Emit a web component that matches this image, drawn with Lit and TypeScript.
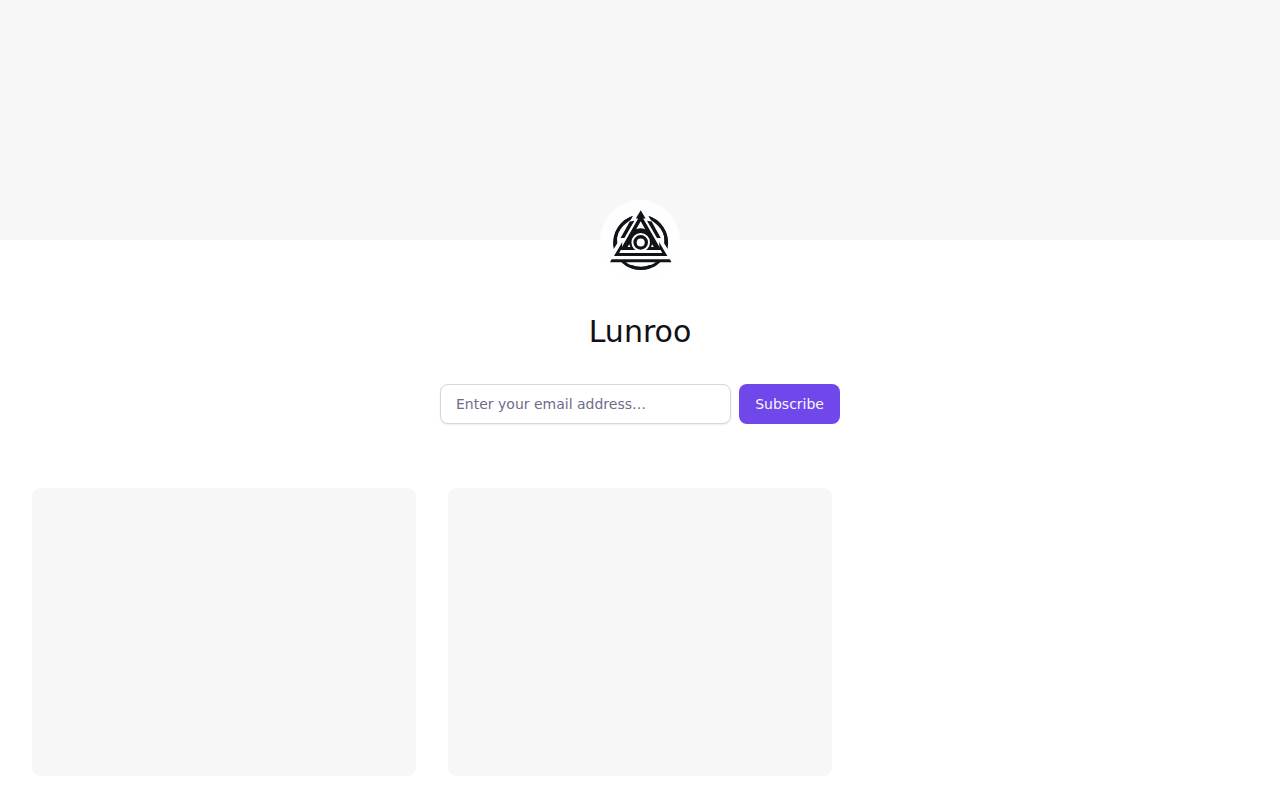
import { LitElement, html, css } from "lit";
import { customElement } from "lit/decorators.js";

@customElement("app-root")
export class AppRoot extends LitElement {
  static styles = css`
    :host { display: block; height: 800px; overflow: hidden; background: #fff; color: #101114; font-family: "DejaVu Sans", sans-serif; }
    * { box-sizing: border-box; }
    .cover { height: 240px; background: #f7f7f7; }
    .profile { display: flex; flex-direction: column; align-items: center; margin-top: -40px; }
    .avatar { width: 80px; height: 80px; border-radius: 50%; background: #fefefe; overflow: hidden; }
    .avatar svg { display: block; }
    h1 { margin: 32px 0 0; font-size: 30px; line-height: 40px; font-weight: 400; }
    form { display: flex; gap: 8px; width: 400px; height: 40px; margin-top: 32px; }
    input, button { font-family: inherit; font-size: 14px; line-height: 20px; border-radius: 8px; margin: 0; }
    input { flex: 1; min-width: 0; padding: 0 15px; border: 1px solid #d5d6d9; background: #fff; color: #101114; box-shadow: 0 1px 2px rgba(0, 0, 0, 0.08); outline: none; }
    input::placeholder { color: #6f6c8b; opacity: 1; }
    button { padding: 0 16px; border: 0; background: #7047eb; color: #f7f7f7; }
    .grid { display: grid; grid-template-columns: repeat(3, 1fr); gap: 32px; padding: 64px 32px 24px; }
    .card { height: 288px; border-radius: 8px; background: #f7f7f7; }
  `;

  render() {
    return html`
      <div class="cover"></div>
      <div class="profile">
        <div class="avatar">
          <svg width="80" height="80" viewBox="0 0 80 80" fill="#101318" aria-hidden="true">
            <circle cx="40.7" cy="42.5" r="25.8" fill="none" stroke="#101318" stroke-width="3.2" />
            <path d="M40.7 3 L78 62 H3.4Z" fill="#fefefe" />
            <path d="M33 15.9 C19.5 19.8 11.6 33 13.7 49 L17.3 43.3 C15.9 31.5 20.8 23.5 30.6 19.9Z" />
            <path d="M48.4 15.9 C61.9 19.8 69.8 33 67.7 49 L64.1 43.3 C65.5 31.5 60.6 23.5 50.8 19.9Z" />
            <path d="M29.8 21.6 L34.4 20.8 L24.4 38 H20.6Z" />
            <path d="M51.6 21.6 L47 20.8 L57 38 H60.8Z" />
            <path d="M14 56 L22.3 42 L21.8 49.5 L19.8 53 H61.6 L59.6 49.5 L59.1 42 L67.4 56Z" />
            <path d="M40.7 10.2 L45.6 18.4 H43.2 L61.2 50 H20.2 L38.2 18.4 H35.8Z" />
            <path d="M40.7 21.3 L45.2 29.2 Q40.7 27.2 36.2 29.2Z" fill="#fefefe" />
            <circle cx="40.7" cy="42.4" r="8.3" fill="none" stroke="#fefefe" stroke-width="2" />
            <circle cx="40.7" cy="42.4" r="4" fill="#fefefe" />
            <path d="M29.2 44.3 L30.4 47 H27.6Z M52.2 44.3 L53.8 47 H51Z" fill="#fefefe" />
            <path d="M20.8 50 H60.6 L62.2 53 H19.2Z" fill="#fefefe" />
            <path d="M10 56 H72 V65 H10Z" fill="#fefefe" />
            <path d="M11.6 59.3 H69.8 L71.5 62.3 H10Z" />
            <path d="M20.8 61.5 C31 72.8 50.6 72.8 60.8 61.5 H56.6 C48 68.8 33.4 68.8 25 61.5Z" />
          </svg>
        </div>
        <h1>Lunroo</h1>
        <form @submit=${(event: Event) => event.preventDefault()}>
          <input type="email" placeholder="Enter your email address…" aria-label="Email address" />
          <button type="submit">Subscribe</button>
        </form>
      </div>
      <div class="grid">
        <div class="card"></div>
        <div class="card"></div>
      </div>
    `;
  }
}
